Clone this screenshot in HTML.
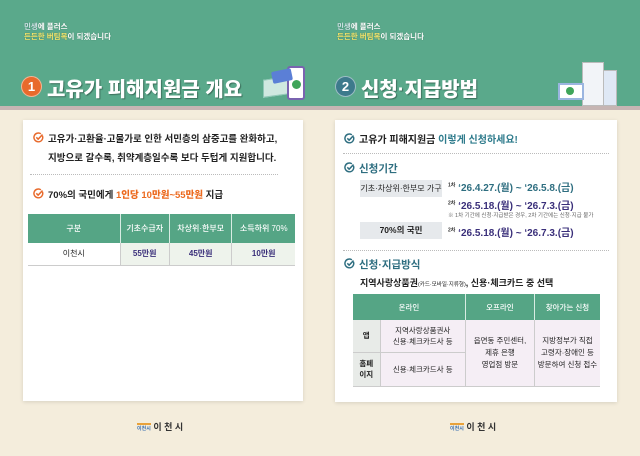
<!DOCTYPE html>
<html><head><meta charset="utf-8"><style>
*{margin:0;padding:0;box-sizing:border-box}
body{width:640px;height:456px;overflow:hidden;background:#f4eddc;font-family:"Liberation Sans","Noto Sans CJK KR",sans-serif;position:relative;color:#222}
.a{position:absolute}
.hdr{top:0;height:106px;background:#5aa98b;width:320px}
.strip{top:106px;height:4px;width:320px;background:#c6b5b3}
.card{background:#fff;box-shadow:0 1px 4px rgba(0,0,0,.12)}
.small1{font-size:7.5px;font-weight:bold;color:#cfe3e6;text-shadow:0 0 1px rgba(0,0,0,.3)}
.small2{font-size:7.5px;font-weight:bold;color:#fff;text-shadow:0 0 1px rgba(0,0,0,.3)}
.y{color:#f3e46a}
.title{font-size:20px;font-weight:900;color:#fff;text-shadow:1px 1px 1px rgba(0,0,0,.35);white-space:nowrap}
.num{width:21px;height:21px;border-radius:50%;color:#fff;font-size:13px;font-weight:bold;text-align:center;line-height:19px;border:1.5px solid rgba(255,255,255,.5)}
.t{font-size:9.5px;white-space:nowrap;color:#222;font-weight:bold}
.chk{display:inline-block;width:11px;height:11px;margin-right:4px;vertical-align:-1px}
.dot{border-top:1px dotted #bbb}
table{border-collapse:collapse;font-size:8px;text-align:center;color:#222}
th{background:#55a585;color:#fff;font-weight:500;border-right:1px solid #d8ece3}
td{border-right:1px solid #ccc;border-bottom:1px solid #ccc}
</style></head><body>
<svg width="0" height="0" style="position:absolute"><defs>
<symbol id="co" viewBox="0 0 12 12"><path d="M10.3 4.2A4.8 4.8 0 1 1 8.6 2" fill="none" stroke="#e86a2c" stroke-width="1.6"/><path d="M3.6 5.8l2 2 4.8-5" fill="none" stroke="#e86a2c" stroke-width="1.6"/></symbol>
<symbol id="cb" viewBox="0 0 12 12"><path d="M10.3 4.2A4.8 4.8 0 1 1 8.6 2" fill="none" stroke="#2e6e80" stroke-width="1.6"/><path d="M3.6 5.8l2 2 4.8-5" fill="none" stroke="#2e6e80" stroke-width="1.6"/></symbol>
</defs></svg>
<div class="a hdr" style="left:0"></div><div class="a hdr" style="left:320px"></div>
<div class="a strip" style="left:0"></div><div class="a strip" style="left:320px"></div>
<div class="a small1" style="left:24px;top:21px">민생<span style="color:#fff">에 플러스</span></div>
<div class="a small2" style="left:24px;top:31px"><span class="y">든든한 버팀목</span>이 되겠습니다</div>
<div class="a small1" style="left:337px;top:21px">민생<span style="color:#fff">에 플러스</span></div>
<div class="a small2" style="left:337px;top:31px"><span class="y">든든한 버팀목</span>이 되겠습니다</div>
<div class="a num" style="left:21px;top:76px;background:#e86a2c">1</div>
<div class="a title" style="left:47px;top:73px">고유가 피해지원금 개요</div>
<div class="a num" style="left:335px;top:76px;background:#3d7a8c">2</div>
<div class="a title" style="left:361px;top:73px">신청·지급방법</div>
<div class="a" style="left:263px;top:78px;width:26px;height:18px;background:#cfe8e0;transform:skewY(-8deg);border:1px solid #8fc7b6"></div>
<div class="a" style="left:287px;top:66px;width:18px;height:34px;background:#fff;border:2px solid #7a63b0;border-radius:3px"></div>
<div class="a" style="left:272px;top:70px;width:20px;height:12px;background:#5b7fd6;transform:rotate(-12deg);border-radius:2px"></div>
<div class="a" style="left:292px;top:80px;width:9px;height:9px;border-radius:50%;background:#3fa55a"></div>
<div class="a" style="left:582px;top:62px;width:22px;height:44px;background:#f2f4f8;border:1px solid #bbb"></div>
<div class="a" style="left:603px;top:70px;width:14px;height:36px;background:#dfe8f5;border:1px solid #bbb"></div>
<div class="a" style="left:558px;top:83px;width:26px;height:17px;background:#fff;border:2px solid #9bb5e0"></div>
<div class="a" style="left:566px;top:87px;width:8px;height:8px;border-radius:50%;background:#3fa55a"></div>

<div class="a card" style="left:23px;top:120px;width:280px;height:281px"></div>
<div class="a t" style="left:33px;top:130px;line-height:19px"><svg class="chk"><use href="#co"/></svg>고유가·고환율·고물가로 인한 서민층의 삼중고를 완화하고,<br><span style="margin-left:15px">지방으로 갈수록, 취약계층일수록 보다 두텁게 지원합니다.</span></div>
<div class="a dot" style="left:30px;top:174px;width:248px"></div>
<div class="a t" style="left:33px;top:187px"><svg class="chk"><use href="#co"/></svg>70%의 국민에게 <b style="color:#ec6a1f">1인당 10만원~55만원</b> 지급</div>
<table class="a" style="left:28px;top:214px;width:267px">
<tr style="height:29px"><th style="width:92px">구분</th><th>기초수급자</th><th>차상위·한부모</th><th style="border-right:0">소득하위 70%</th></tr>
<tr style="height:22px"><td style="background:#fff">이천시</td><td style="background:#eef3ec;color:#3a2f7a;font-weight:bold">55만원</td><td style="background:#eef3ec;color:#3a2f7a;font-weight:bold">45만원</td><td style="background:#eef3ec;color:#3a2f7a;font-weight:bold;border-right:0">10만원</td></tr>
</table>

<div class="a card" style="left:335px;top:120px;width:282px;height:282px"></div>
<div class="a t" style="left:344px;top:131px;font-size:10px"><svg class="chk"><use href="#cb"/></svg>고유가 피해지원금 <span style="color:#2e7b8c">이렇게 신청하세요!</span></div>
<div class="a dot" style="left:343px;top:153px;width:266px"></div>
<div class="a t" style="left:344px;top:161px;font-size:10.5px;color:#2e6e80"><svg class="chk"><use href="#cb"/></svg>신청기간</div>
<div class="a" style="left:360px;top:180px;width:82px;height:17px;background:#e6e9ec;font-size:8px;text-align:center;line-height:17px">기초·차상위·한부모 가구</div>
<div class="a" style="left:360px;top:222px;width:82px;height:17px;background:#e6e9ec;font-size:8.5px;text-align:center;line-height:17px;font-weight:bold">70%의 국민</div>
<div class="a" style="left:448px;top:179px;font-size:10px;font-weight:bold;color:#2e6e80;white-space:nowrap"><sup style="font-size:5px;color:#333">1차</sup> ‘26.4.27.(월) ~ ‘26.5.8.(금)</div>
<div class="a" style="left:448px;top:197px;font-size:10px;font-weight:bold;color:#3a2f7a;white-space:nowrap"><sup style="font-size:5px;color:#333">2차</sup> ‘26.5.18.(월) ~ ‘26.7.3.(금)</div>
<div class="a" style="left:448px;top:211px;font-size:5.5px;color:#666;white-space:nowrap">※ 1차 기간에 신청·지급받은 경우, 2차 기간에는 신청·지급 불가</div>
<div class="a" style="left:448px;top:224px;font-size:10px;font-weight:bold;color:#3a2f7a;white-space:nowrap"><sup style="font-size:5px;color:#333">2차</sup> ‘26.5.18.(월) ~ ‘26.7.3.(금)</div>
<div class="a dot" style="left:343px;top:250px;width:266px"></div>
<div class="a t" style="left:344px;top:257px;font-size:10.5px;color:#2e6e80"><svg class="chk"><use href="#cb"/></svg>신청·지급방식</div>
<div class="a t" style="left:360px;top:276px;font-size:9px">지역사랑상품권<span style="font-size:5.5px;font-weight:normal">(카드·모바일·지류형)</span>, 신용·체크카드 중 선택</div>
<table class="a" style="left:353px;top:294px;width:247px;font-size:7.5px">
<tr style="height:26px"><th colspan="2" style="width:105px">온라인</th><th style="width:69px">오프라인</th><th style="border-right:0">찾아가는 신청</th></tr>
<tr style="height:32px"><td style="background:#e8ebe8;width:27px;font-weight:bold">앱</td><td style="background:#f5eef5">지역사랑상품권사<br>신용·체크카드사 등</td><td rowspan="2" style="background:#f5eef5;line-height:12px">읍면동 주민센터,<br>제휴 은행<br>영업점 방문</td><td rowspan="2" style="background:#f5eef5;border-right:0;line-height:12px">지방정부가 직접<br>고령자·장애인 등<br>방문하여 신청 접수</td></tr>
<tr style="height:34px"><td style="background:#e8ebe8;font-weight:bold">홈페<br>이지</td><td style="background:#f5eef5">신용·체크카드사 등</td></tr>
</table>

<div class="a" style="left:137px;top:420px;font-size:9px;font-weight:bold;color:#333;white-space:nowrap"><span style="font-size:5px;color:#3a6fb0;border-top:2px solid #e9a23a;padding-top:1px">이천시</span> 이 천 시</div>
<div class="a" style="left:450px;top:420px;font-size:9px;font-weight:bold;color:#333;white-space:nowrap"><span style="font-size:5px;color:#3a6fb0;border-top:2px solid #e9a23a;padding-top:1px">이천시</span> 이 천 시</div>
</body></html>
